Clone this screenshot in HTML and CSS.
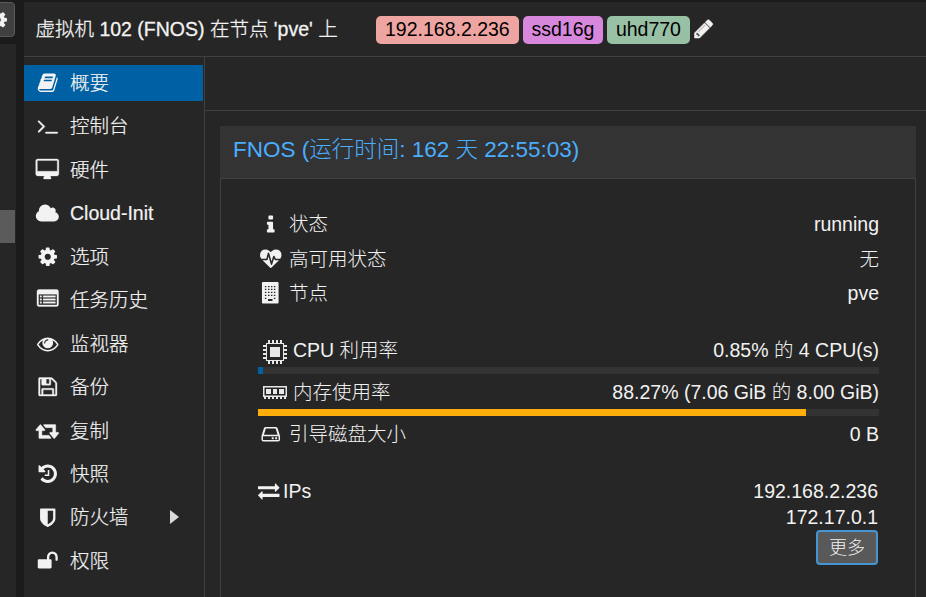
FILE: index.html
```html
<!DOCTYPE html>
<html lang="zh-CN">
<head>
<meta charset="utf-8">
<title>虚拟机 102 (FNOS)</title>
<link rel="stylesheet" href="styles.css">
</head>
<body>
<div class="app">
  <aside class="tree">
    <div class="tree-head"><div class="tree-btn"><svg class="ico" viewBox="0 0 1792 1792"><use href="#cog"/></svg></div></div>
    <div class="tree-body"><div class="tree-thumb"></div></div>
  </aside>
  <main class="main">
    <header class="header">
      <h1 class="title">虚拟机 102 (FNOS) 在节点 'pve' 上</h1>
      <div class="tags">
        <span class="tag tag-red">192.168.2.236</span>
        <span class="tag tag-purple">ssd16g</span>
        <span class="tag tag-green">uhd770</span>
      </div>
      <svg class="ico pencil" viewBox="0 0 1792 1792"><path d="M491 1536l91-91-235-235-91 91v107h128v128h107zm523-928q0-22-22-22-10 0-17 7l-542 542q-7 7-7 17 0 22 22 22 10 0 17-7l542-542q7-7 7-17zm-54-192l416 416-832 832h-416v-416zm683 96q0 53-37 90l-166 166-416-416 166-165q36-38 90-38 53 0 91 38l235 234q37 39 37 91z"/></svg>
    </header>
    <div class="body">
      <nav class="nav">
        <a class="item active"><svg class="ico" viewBox="0 0 1792 1792"><path d="M1703 478q40 57 18 129l-275 906q-19 64-76.500 107.500t-122.500 43.500h-923q-77 0-148.500-53.500t-99.500-131.500q-24-67-2-127 0-4 3-27t4-37q1-8-3-21.500t-3-19.500q2-11 8-21t16.500-23.500 16.500-23.500q23-38 45-91.500t30-91.500q3-10 .5-30t-.5-28q3-11 17-28t17-23q21-36 42-92t25-90q1-9-2.500-32t.5-28q4-13 22-30.500t22-22.500q19-26 42.500-84.500t27.500-96.500q1-8-3-25.500t-2-26.500q2-8 9-18t18-23 17-21q8-12 16.500-30.500t15-35 16-36 19.500-32 26.500-23.500 36-11.500 47.500 5.500l-1 3q38-9 51-9h761q74 0 114 56t18 130l-274 906q-36 119-71.500 153.500t-128.500 34.500h-869q-27 0-38 15-11 16-1 43 24 70 144 70h923q29 0 56-15.500t35-41.500l300-987q7-22 5-57 38 15 59 43zm-1064 2q-4 13 2 22.500t20 9.500h608q13 0 25.500-9.500t16.500-22.500l21-64q4-13-2-22.500t-20-9.500h-608q-13 0-25.500 9.500t-16.500 22.500zm-83 256q-4 13 2 22.500t20 9.500h608q13 0 25.500-9.500t16.500-22.500l21-64q4-13-2-22.500t-20-9.500h-608q-13 0-25.500 9.500t-16.500 22.500z"/></svg><span>概要</span></a>
        <a class="item"><svg class="ico line raised" viewBox="0 0 1792 1792"><path d="M649 983l-466 466q-10 10-23 10t-23-10l-50-50q-10-10-10-23t10-23l393-393-393-393q-10-10-10-23t10-23l50-50q10-10 23-10t23 10l466 466q10 10 10 23t-10 23zm1079 457v64q0 14-9 23t-23 9h-960q-14 0-23-9t-9-23v-64q0-14 9-23t23-9h960q14 0 23 9t9 23z"/></svg><span>控制台</span></a>
        <a class="item"><svg class="ico wide line" viewBox="0 0 2048 1792"><path d="M1856 992v-832q0-13-9.500-22.500t-22.500-9.500h-1600q-13 0-22.500 9.500t-9.500 22.500v832q0 13 9.500 22.500t22.500 9.500h1600q13 0 22.500-9.500t9.500-22.500zm128-832v1088q0 66-47 113t-113 47h-544q0 37 16 77.500t32 71 16 43.500q0 26-19 45t-45 19h-512q-26 0-45-19t-19-45q0-14 16-44t32-70 16-78h-544q-66 0-113-47t-47-113v-1088q0-66 47-113t113-47h1600q66 0 113 47t47 113z"/></svg><span>硬件</span></a>
        <a class="item"><svg class="ico wide" viewBox="0 0 2048 1792"><path d="M1984 1152q0 159-112.500 271.500t-271.500 112.500h-1088q-185 0-316.500-131.500t-131.500-316.500q0-132 71-241.500t187-163.500q-2-28-2-43 0-212 150-362t362-150q158 0 286.500 88t187.500 230q70-62 166-62 106 0 181 75t75 181q0 75-41 138 129 30 213 134.500t84 239.500z"/></svg><span class="strong">Cloud-Init</span></a>
        <a class="item"><svg class="ico" viewBox="0 0 1792 1792"><path id="cog" d="M1152 896q0-106-75-181t-181-75-181 75-75 181 75 181 181 75 181-75 75-181zm512-109v222q0 12-8 23t-20 13l-185 28q-19 54-39 91 35 50 107 138 10 12 10 25t-9 23q-27 37-99 108t-94 71q-12 0-26-9l-138-108q-44 23-91 38-16 136-29 186-7 28-36 28h-222q-14 0-24.500-8.500t-11.500-21.500l-28-184q-49-16-90-37l-141 107q-10 9-25 9-14 0-25-11-126-114-165-168-7-10-7-23 0-12 8-23 15-21 51-66.500t54-70.500q-27-50-41-99l-183-27q-13-2-21-12.500t-8-23.500v-222q0-12 8-23t19-13l186-28q14-46 39-92-40-57-107-138-10-12-10-24 0-10 9-23 26-36 98.500-107.500t94.500-71.500q13 0 26 10l138 107q44-23 91-38 16-136 29-186 7-28 36-28h222q14 0 24.500 8.500t11.500 21.500l28 184q49 16 90 37l142-107q9-9 24-9 13 0 25 10 129 119 165 170 7 8 7 22 0 12-8 23-15 21-51 66.500t-54 70.500q26 50 41 98l183 28q13 2 21 12.500t8 23.500z"/></svg><span>选项</span></a>
        <a class="item"><svg class="ico line raised" viewBox="0 0 1792 1792"><path fill-rule="evenodd" d="M160 128h1472q160 0 160 160v1088q0 160-160 160h-1472q-160 0-160-160v-1088q0-160 160-160zM160 512q-32 0-32 32v832q0 32 32 32h1472q32 0 32-32v-832q0-32-32-32zM256 640h128v128h-128zM256 896h128v128h-128zM256 1152h128v128h-128zM512 640h1024v128h-1024zM512 896h1024v128h-1024zM512 1152h1024v128h-1024z"/></svg><span>任务历史</span></a>
        <a class="item"><svg class="ico" viewBox="0 0 1792 1792"><path d="M1664 960q-152-236-381-353 61 104 61 225 0 185-131.500 316.500t-316.500 131.500-316.500-131.500-131.500-316.500q0-121 61-225-229 117-381 353 133 205 333.500 326.500t434.500 121.500 434.500-121.500 333.500-326.500zm-720-384q0-20-14-34t-34-14q-125 0-214.500 89.500t-89.500 214.500q0 20 14 34t34 14 34-14 14-34q0-86 61-147t147-61q20 0 34-14t14-34zm848 384q0 34-20 69-140 230-376.500 368.500t-499.500 138.500-499.500-139-376.500-368q-20-35-20-69t20-69q140-229 376.500-368t499.500-139 499.500 139 376.500 368q20 35 20 69z"/></svg><span>监视器</span></a>
        <a class="item"><svg class="ico line" viewBox="0 0 1792 1792"><path d="M512 1536h768v-384h-768v384zm896 0h128v-896q0-14-10-38.500t-20-34.500l-281-281q-10-10-34-20t-39-10v416q0 40-28 68t-68 28h-576q-40 0-68-28t-28-68v-416h-128v1280h128v-416q0-40 28-68t68-28h832q40 0 68 28t28 68v416zm-384-928v-320q0-13-9.500-22.500t-22.500-9.500h-192q-13 0-22.500 9.500t-9.500 22.500v320q0 13 9.500 22.500t22.500 9.500h192q13 0 22.500-9.500t9.500-22.500zm640 32v928q0 40-28 68t-68 28h-1344q-40 0-68-28t-28-68v-1344q0-40 28-68t68-28h928q40 0 88 20t76 48l280 280q28 28 48 76t20 88z"/></svg><span>备份</span></a>
        <a class="item"><svg class="ico wide line" viewBox="-64 0 2048 1792"><path d="M1280 1504q0 13-9.500 22.500t-22.500 9.500h-960q-8 0-13.500-2t-9-7-5.500-8-3-11.500-1-11.500v-600h-192q-26 0-45-19t-19-45q0-24 15-41l320-384q19-22 49-22t49 22l320 384q15 17 15 41 0 26-19 45t-45 19h-192v384h576q16 0 25 11l160 192q7 10 7 21zm640-416q0 24-15 41l-320 384q-20 23-49 23t-49-23l-320-384q-15-17-15-41 0-26 19-45t45-19h192v-384h-576q-16 0-25-12l-160-192q-7-9-7-20 0-13 9.500-22.500t22.500-9.500h960q8 0 13.500 2t9 7 5.500 8 3 11.500 1 11.500v600h192q26 0 45 19t19 45z"/></svg><span>复制</span></a>
        <a class="item"><svg class="ico" viewBox="0 0 1792 1792"><path d="M1664 896q0 156-61 298t-164 245-245 164-298 61q-172 0-327-72.500t-264-204.500q-7-10-6.500-22.500t8.500-20.500l137-138q10-9 25-9 16 2 23 12 73 95 179 147t225 52q104 0 198.500-40.500t163.500-109.500 109.500-163.500 40.500-198.500-40.500-198.500-109.500-163.500-163.500-109.500-198.500-40.500q-98 0-188 35.500t-160 101.500l137 138q31 30 14 69-17 40-59 40h-448q-26 0-45-19t-19-45v-448q0-42 40-59 39-17 69 14l130 129q107-101 244.500-156.500t284.500-55.500q156 0 298 61t245 164 164 245 61 298zm-640-288v448q0 14-9 23t-23 9h-320q-14 0-23-9t-9-23v-64q0-14 9-23t23-9h224v-352q0-14 9-23t23-9h64q14 0 23 9t9 23z"/></svg><span>快照</span></a>
        <a class="item"><svg class="ico" viewBox="0 0 1792 1792"><path d="M1344 960v-640h-448v1137q119-63 213-137 235-184 235-360zm192-768v768q0 86-33.500 170.500t-83 150-118 127.500-126.500 103-121 77.500-89.500 49.500-42.500 20q-12 6-26 6t-26-6q-16-7-42.500-20t-89.500-49.500-121-77.500-126.500-103-118-127.500-83-150-33.500-170.500v-768q0-26 19-45t45-19h1152q26 0 45 19t19 45z"/></svg><span>防火墙</span><svg class="caret" viewBox="0 0 9 14"><path d="M0 0L9 7L0 14z"/></svg></a>
        <a class="item"><svg class="ico" viewBox="0 0 1792 1792"><path d="M1728 576v256q0 26-19 45t-45 19h-64q-26 0-45-19t-19-45v-256q0-106-75-181t-181-75-181 75-75 181v192h96q40 0 68 28t28 68v576q0 40-28 68t-68 28h-960q-40 0-68-28t-28-68v-576q0-40 28-68t68-28h672v-192q0-185 131.500-316.500t316.500-131.500 316.500 131.500 131.500 316.500z"/></svg><span>权限</span></a>
      </nav>
      <section class="content">
        <div class="toolbar"></div>
        <div class="panel">
          <h2 class="panel-head">FNOS (运行时间: 162 天 22:55:03)</h2>
          <div class="panel-body">
            <div class="row"><span class="cell"><svg class="ico" viewBox="0 0 1792 1792"><path d="M1216 1344v128q0 26-19 45t-45 19h-512q-26 0-45-19t-19-45v-128q0-26 19-45t45-19h64v-384h-64q-26 0-45-19t-19-45v-128q0-26 19-45t45-19h384q26 0 45 19t19 45v576h64q26 0 45 19t19 45zm-128-1152v192q0 26-19 45t-45 19h-256q-26 0-45-19t-19-45v-192q0-26 19-45t45-19h256q26 0 45 19t19 45z"/></svg></span><span>状态</span><span class="value">running</span></div>
            <div class="row"><span class="cell"><svg class="ico" viewBox="0 0 1792 1792"><path d="M1280 1024h305q-5 6-10 10.500t-9 7.500l-3 4-623 600q-18 18-44 18t-44-18l-624-602q-5-2-21-20h369q22 0 39.500-13.500t22.500-34.500l70-281 190 667q6 20 23 33t39 13q21 0 38-13t23-33l146-485 56 112q18 35 57 35zm512-428q0 145-103 300h-369l-111-221q-8-17-25.500-27t-36.500-8q-45 5-56 46l-129 430-196-686q-6-20-23.500-33t-39.500-13-39 13.500-22 34.500l-116 464h-423q-103-155-103-300 0-220 127-344t351-124q62 0 126.500 21.500t120 58 95.500 68.500 76 68q36-36 76-68t95.500-68.500 120-58 126.500-21.500q224 0 351 124t127 344z"/></svg></span><span>高可用状态</span><span class="value">无</span></div>
            <div class="row"><span class="cell"><svg class="ico building" viewBox="0 0 22 22"><path fill-rule="evenodd" d="M3 0h15q1 0 1 1v20q0 1-1 1h-15q-1 0-1-1v-20q0-1 1-1zM5 4v1.300h1.500v-1.300zM8.200 4v1.300h1.500v-1.300zM11.200 4v1.300h1.500v-1.300zM14.200 4v1.300h1.500v-1.300zM5 7v1.300h1.500v-1.300zM8.200 7v1.300h1.500v-1.300zM11.200 7v1.300h1.500v-1.300zM14.200 7v1.300h1.500v-1.300zM5 10v1.300h1.500v-1.300zM8.200 10v1.300h1.500v-1.300zM11.200 10v1.300h1.500v-1.300zM14.200 10v1.300h1.500v-1.300zM5 13v1.300h1.500v-1.300zM8.200 13v1.300h1.500v-1.300zM11.200 13v1.300h1.500v-1.300zM14.200 13v1.300h1.500v-1.300zM5 16v1.300h1.500v-1.300zM14.200 16v1.300h1.500v-1.300zM8.200 17.500v2h4.600v-2z"/></svg></span><span>节点</span><span class="value">pve</span></div>
            <div class="row group"><span class="cell device"><svg class="chip" viewBox="0 0 24 24"><path fill-rule="evenodd" d="M3 3h18v18h-18zM4 4v16h16v-16z"/><path d="M7 7h10v10h-10zM5 0h2v3h-2zM9 0h2v3h-2zM13 0h2v3h-2zM17 0h2v3h-2zM5 21h2v3h-2zM9 21h2v3h-2zM13 21h2v3h-2zM17 21h2v3h-2zM0 5h3v2h-3zM0 9h3v2h-3zM0 13h3v2h-3zM0 17h3v2h-3zM21 5h3v2h-3zM21 9h3v2h-3zM21 13h3v2h-3zM21 17h3v2h-3z"/></svg></span><span>CPU 利用率</span><span class="value">0.85% 的 4 CPU(s)</span></div>
            <div class="bar"><div class="fill fill-cpu"></div></div>
            <div class="row"><span class="cell device"><svg class="chip" viewBox="0 0 24 24"><path fill-rule="evenodd" d="M0 5h24v11h-24zM1.500 6.500v8h21v-8z"/><path d="M3 8h5v5h-5zM10 8h4v5h-4zM16 8h5v5h-5zM1 16h2v2h-2zM5 16h2v2h-2zM9 16h2v2h-2zM13 16h2v2h-2zM17 16h2v2h-2zM21 16h2v2h-2z"/></svg></span><span>内存使用率</span><span class="value">88.27% (7.06 GiB 的 8.00 GiB)</span></div>
            <div class="bar"><div class="fill fill-mem"></div></div>
            <div class="row row-disk"><span class="cell"><svg class="ico disk" viewBox="0 0 22 22"><path fill-rule="evenodd" d="M6 4h10q1.600 0 2.100 1.500l2 6.500q.4 1 .4 2v3q0 2-2 2h-15q-2 0-2-2v-3q0-1 .4-2l2-6.500q.5-1.500 2.100-1.500zM6 5.500l-2 6.500h14l-2-6.500zM3 13.500v4h16v-4z"/><path d="M12 14.500h2v2h-2zM15.500 14.500h2v2h-2z"/></svg></span><span>引导磁盘大小</span><span class="value">0 B</span></div>
            <div class="row group ips"><svg class="ico" viewBox="0 0 1792 1792"><path d="M1792 1184v192q0 13-9.500 22.500t-22.500 9.500h-1376v192q0 13-9.500 22.500t-22.500 9.500q-12 0-24-10l-319-320q-9-9-9-22 0-14 9-23l320-320q9-9 23-9 13 0 22.500 9.500t9.500 22.500v192h1376q13 0 22.500 9.500t9.500 22.500zm0-544q0 14-9 23l-320 320q-9 9-23 9-13 0-22.500-9.500t-9.500-22.500v-192h-1376q-13 0-22.500-9.500t-9.500-22.500v-192q0-13 9.500-22.500t22.500-9.500h1376v-192q0-14 9-23t23-9q12 0 24 10l319 319q9 9 9 23z"/></svg><span>IPs</span>
              <div class="ip-list"><span>192.168.2.236</span><span>172.17.0.1</span><button class="more">更多</button></div>
            </div>
          </div>
        </div>
      </section>
    </div>
  </main>
</div>
</body>
</html>
```
FILE: styles.css
```css
* { box-sizing: border-box; }
body {
  margin: 0;
  height: 597px;
  overflow: hidden;
  background: #1b1b1b;
  color: #f2f2f2;
  font: 19.5px/26px "Liberation Sans", "Noto Sans CJK SC", sans-serif;
  font-weight: 300;
}
h1, h2 { margin: 0; font-weight: 300; }
.app { display: flex; height: 597px; }
.ico { width: 21.5px; height: 21.5px; fill: #f2f2f2; flex: none; display: block; overflow: visible; }
.ico.wide { width: 24.6px; margin: 0 -1.55px; }
.ico.line { stroke: #f2f2f2; stroke-width: 30; }
.ico.raised { margin-bottom: 2px; }

.tree { width: 24px; flex: none; display: flex; flex-direction: column; }
.tree-head { height: 44px; padding-top: 2px; width: 15px; overflow: hidden; display: flex; justify-content: flex-end; }
.tree-btn {
  width: 40px; height: 35px; flex: none;
  display: flex; align-items: center; justify-content: flex-end;
  padding-right: 6px;
  background: #404040; border: 1px solid #5a5a5a; border-radius: 4px;
}
.tree-body { flex: 1; width: 16px; background: #262626; padding-top: 166px; }
.tree-thumb { width: 15px; height: 33px; background: #5b5b5b; }

.main { flex: 1; min-width: 0; margin-top: 2px; background: #262626; display: flex; flex-direction: column; }
.header { height: 55px; flex: none; display: flex; align-items: center; padding-left: 11.5px; border-bottom: 1px solid #404040; }
.title { width: 340.5px; font-size: 19.5px; white-space: nowrap; -webkit-text-stroke: .3px; }
.tags { display: flex; gap: 3.8px; margin-top: 2px; }
.tag { height: 28px; padding: 0 9px; border-radius: 5px; color: #000; line-height: 27px; }
.tag-red { background: #eea4a1; }
.tag-purple { background: #d888dc; }
.tag-green { background: #98c0a4; padding: 0 8.700px; }
.pencil { margin-left: 3.500px; stroke: #f2f2f2; stroke-width: 50; }

.body { flex: 1; display: flex; min-height: 0; }
.nav { width: 181px; flex: none; border-right: 1px solid #404040; padding-top: 8px; display: flex; flex-direction: column; gap: 7.45px; }
.item { width: 179px; height: 36px; flex: none; display: flex; align-items: center; padding-left: 12.5px; }
.item span { margin-left: 12px; -webkit-text-stroke: .2px; }
.item.active { background: #0060a4; }
.caret { width: 9px; height: 14px; margin-left: 41px; fill: #dadada; }

.content { flex: 1; min-width: 0; display: flex; flex-direction: column; }
.toolbar { height: 54px; flex: none; border-bottom: 1px solid #404040; }
.panel { flex: 1; margin: 15px 10px 0 15px; display: flex; flex-direction: column; }
.panel-head { height: 53px; flex: none; padding-left: 13px; background: #333; border-bottom: 1px solid #404040; color: #4aaeff; font-size: 22.5px; line-height: 48px; }
.panel-body { flex: 1; padding: 28px 36px 0 37px; border: solid #404040; border-width: 0 1px; }
.row { display: flex; align-items: center; height: 34.5px; white-space: nowrap; }
.cell { width: 31px; flex: none; padding-left: 2px; }
.cell.device { width: 35px; padding-left: 5px; }
.building { margin-top: -1px; }
.chip { width: 24px; height: 24px; display: block; fill: #e8e8e8; margin-top: 3px; }
.value { margin-left: auto; }
.row.group { margin-top: 22.500px; }
.bar { height: 7px; background: #333; margin-top: -.3px; }
.bar + .row { height: 35px; }
.bar + .row-disk { height: 36.5px; }
.fill { height: 7px; }
.fill-cpu { width: .85%; background: #0060a4; }
.fill-mem { width: 88.27%; background: #ffae0c; }
.row.ips { align-items: flex-start; height: auto; gap: 3.5px; padding-top: 3.5px; }
.row.ips .ico { margin-top: 2px; }
.ip-list { margin-left: auto; padding-right: 1px; display: flex; flex-direction: column; align-items: flex-end; }
.more {
  width: 62px; height: 35px; padding: 0;
  border: 2px solid #4695d2; border-radius: 4px;
  background: #595959; color: #f2f2f2;
  font: 300 18px/30px "Liberation Sans", "Noto Sans CJK SC", sans-serif;
}
```
